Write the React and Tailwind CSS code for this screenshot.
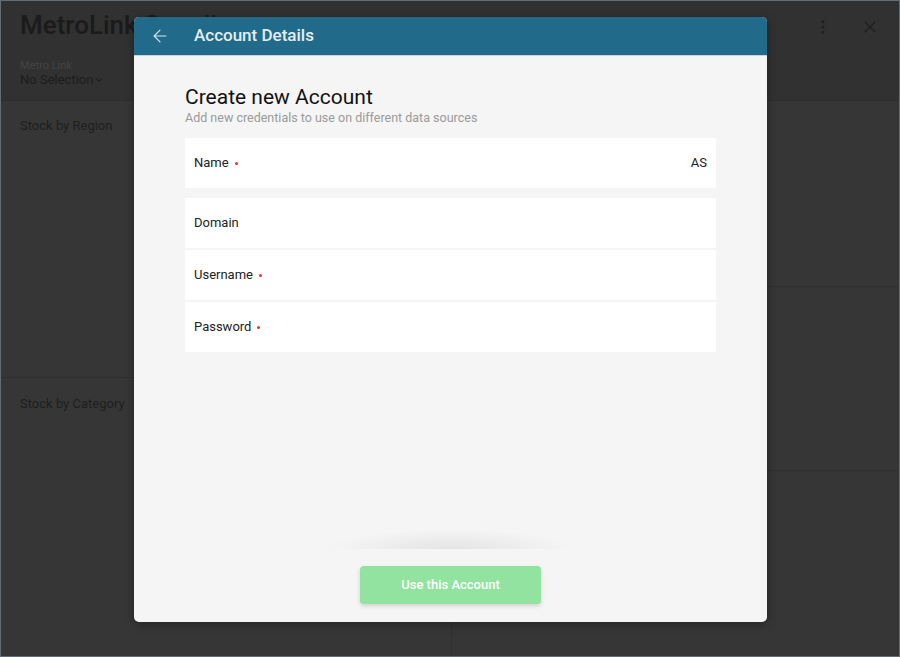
import { ArrowLeft, X, MoreVertical, ChevronDown } from 'lucide-react';

const font = { fontFamily: 'Roboto, "Liberation Sans", sans-serif' };

function Field({ label, required, value, className = '' }) {
  return (
    <div className={`flex h-[50px] items-center justify-between bg-white px-[9px] ${className}`}>
      <div className="flex items-center text-[13px] text-[#222]">
        <span>{label}</span>
        {required && <span className="ml-[6px] h-[3px] w-[3px] rounded-full bg-[#f03030]" />}
      </div>
      {value && <span className="text-[13px] text-[#222]">{value}</span>}
    </div>
  );
}

export default function App() {
  return (
    <div style={font} className="relative h-[657px] w-[900px] overflow-hidden border border-[#5f6e79] bg-[#363636]">
      {/* dashboard behind the overlay */}
      <div className="flex h-[100px] items-start justify-between border-b border-[#2d2d2d] bg-[#313131] px-[19px]">
        <div>
          <div className="mt-[8px] text-[26px] font-medium leading-[32px] text-[#1b1b1b]">MetroLink Supplies</div>
          <div className="mt-[19px] text-[11px] leading-[12px] text-[#444]">Metro Link</div>
          <div className="flex items-center text-[13px] leading-[16px] text-[#1c1c1c]">
            No Selection <ChevronDown size={10} strokeWidth={2.5} className="ml-[1px]" />
          </div>
        </div>
        <div className="mt-[16px] flex items-center gap-[28px] text-[#1e1e1e]">
          <MoreVertical size={18} strokeWidth={2} />
          <X size={20} strokeWidth={1.3} />
        </div>
      </div>
      <div className="flex h-[556px]">
        <div className="flex w-[451px] flex-col border-r border-[#2f2f2f]">
          <div className="h-[277px] border-b border-[#2f2f2f] px-[19px] pt-[15px] text-[13px] text-[#1e1e1e]">Stock by Region</div>
          <div className="flex-1 px-[19px] pt-[16px] text-[13px] text-[#1e1e1e]">Stock by Category</div>
        </div>
        <div className="flex flex-1 flex-col">
          <div className="h-[186px] border-b border-[#2f2f2f]" />
          <div className="h-[184px] border-b border-[#2f2f2f]" />
          <div className="flex-1" />
        </div>
      </div>

      {/* dialog */}
      <div className="absolute left-[133px] top-[16px] flex h-[605px] w-[633px] flex-col overflow-hidden rounded-[5px] bg-[#f5f5f5] shadow-[0_2px_10px_rgba(0,0,0,0.35)]">
        <div className="flex h-[39px] items-center border-b border-[#c9d3d8] bg-[#216a89] px-[16px]">
          <ArrowLeft size={20} strokeWidth={1.4} className="text-[#d6e6ee]" />
          <span className="ml-[24px] text-[17px] font-medium text-[#e2eef3]">Account Details</span>
        </div>
        <div className="flex flex-1 flex-col px-[51px]">
          <h1 className="mt-[28px] text-[21px] leading-[26px] text-[#111]">Create new Account</h1>
          <p className="text-[12.5px] leading-[15px] text-[#9a9a9a]">Add new credentials to use on different data sources</p>
          <Field label="Name" required value="AS" className="mt-[13px]" />
          <div className="mt-[10px] flex flex-col gap-[2px]">
            <Field label="Domain" />
            <Field label="Username" required />
            <Field label="Password" required />
          </div>
          <div className="flex-1" />
          <div className="mx-auto h-[20px] w-[250px] bg-[radial-gradient(ellipse_at_bottom,rgba(0,0,0,0.07),rgba(0,0,0,0)_70%)]" />
          <div className="mb-[18px] mt-[17px] flex justify-center">
            <button className="h-[38px] w-[181px] rounded-[4px] bg-[#92e39f] text-[13px] font-medium text-white shadow-[0_2px_4px_rgba(0,0,0,0.15)]">
              Use this Account
            </button>
          </div>
        </div>
      </div>
    </div>
  );
}
